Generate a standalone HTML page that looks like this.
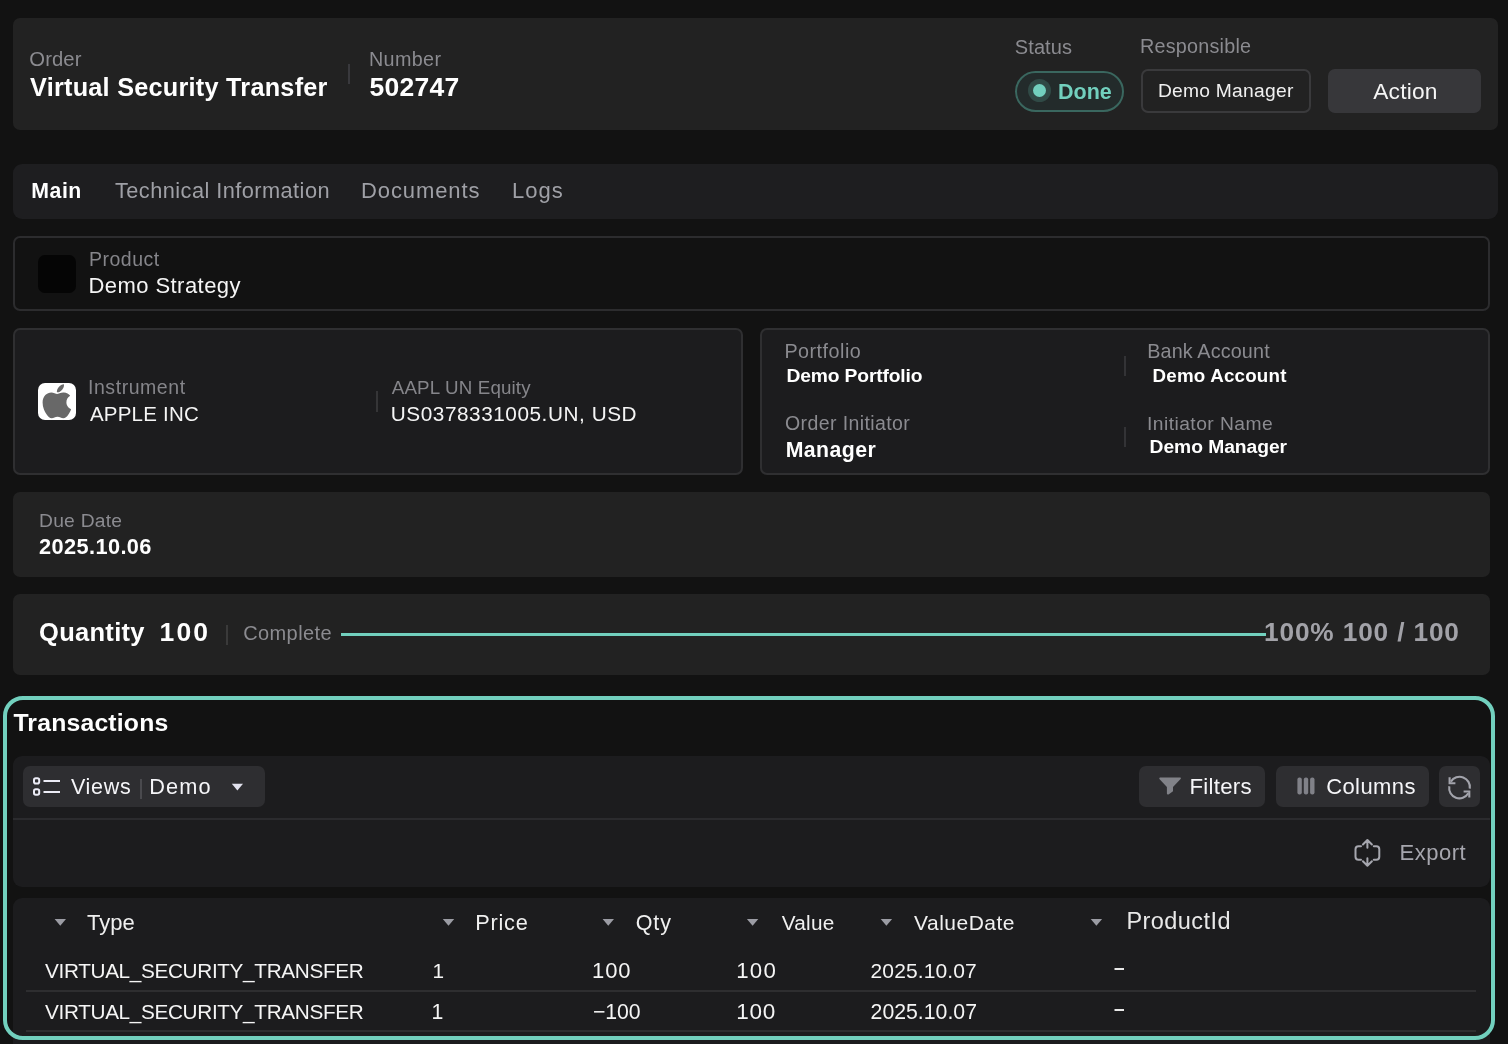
<!DOCTYPE html>
<html><head><meta charset="utf-8"><title>Order</title><style>
*{box-sizing:border-box;margin:0;padding:0}
html,body{width:1508px;height:1044px;overflow:hidden;background:#121212;font-family:"Liberation Sans",sans-serif}
.a{position:absolute}
.t{position:absolute;white-space:pre;font-family:"Liberation Sans",sans-serif}
.card{position:absolute;border-radius:7px}
</style></head>
<body>
<div class="a" style="left:13px;top:18px;width:1485px;height:112px;background:#222222;border-radius:7px"></div>
<div class="a" style="left:348px;top:64px;width:2px;height:20px;background:#39393d"></div>
<div class="a" style="left:1015px;top:71px;width:109px;height:41px;background:#232b2b;border:2px solid #3a675f;border-radius:21px"></div>
<div class="a" style="left:1028px;top:79px;width:23px;height:23px;background:#304a46;border-radius:50%"></div>
<div class="a" style="left:1033px;top:84px;width:13px;height:13px;background:#72d0be;border-radius:50%"></div>
<div class="a" style="left:1141px;top:69px;width:170px;height:44px;border:2px solid #3a3a3c;border-radius:7px"></div>
<div class="a" style="left:1328px;top:69px;width:153px;height:44px;background:#37373a;border-radius:7px"></div>
<div class="a" style="left:13px;top:164px;width:1485px;height:55px;background:#1e1e20;border-radius:9px"></div>
<div class="a" style="left:13px;top:236px;width:1477px;height:75px;border:2px solid #2c2c2e;border-radius:7px"></div>
<div class="a" style="left:38px;top:255px;width:38px;height:38px;background:#050505;border-radius:7px"></div>
<div class="a" style="left:13px;top:328px;width:730px;height:147px;background:#1c1c1e;border:2px solid #2f2f31;border-radius:7px"></div>
<div class="a" style="left:38px;top:383px;width:38px;height:37px;background:#ffffff;border-radius:7px"></div>
<div class="a" style="left:376px;top:391px;width:2px;height:21px;background:#353537"></div>
<div class="a" style="left:760px;top:328px;width:730px;height:147px;background:#1c1c1e;border:2px solid #2f2f31;border-radius:7px"></div>
<div class="a" style="left:1124px;top:356px;width:1.599999999999909px;height:20px;background:#333336"></div>
<div class="a" style="left:1124px;top:427px;width:1.599999999999909px;height:20px;background:#333336"></div>
<div class="a" style="left:13px;top:492px;width:1477px;height:85px;background:#222222;border-radius:7px"></div>
<div class="a" style="left:13px;top:594px;width:1477px;height:81px;background:#222222;border-radius:7px"></div>
<div class="a" style="left:226px;top:625px;width:2px;height:20px;background:#3a3a3a"></div>
<div class="a" style="left:341px;top:633px;width:925px;height:3px;background:#72d0be"></div>
<div class="a" style="left:13px;top:756px;width:1477px;height:131px;background:#1c1c1e;border-radius:9px"></div>
<div class="a" style="left:23px;top:766px;width:242px;height:41px;background:#2e2e31;border-radius:7px"></div>
<div class="a" style="left:140px;top:779px;width:2px;height:20px;background:#4a4a4e"></div>
<div class="a" style="left:13px;top:818px;width:1477px;height:2px;background:#2b2b2e"></div>
<div class="a" style="left:1139px;top:766px;width:126px;height:41px;background:#2e2e31;border-radius:7px"></div>
<div class="a" style="left:1276px;top:766px;width:153px;height:41px;background:#2e2e31;border-radius:7px"></div>
<div class="a" style="left:1439px;top:766px;width:41px;height:41px;background:#2e2e31;border-radius:7px"></div>
<div class="a" style="left:13px;top:898px;width:1477px;height:162px;background:#1c1c1e;border-radius:9px"></div>
<div class="a" style="left:26px;top:990px;width:1450px;height:2px;background:#2e2e30"></div>
<div class="a" style="left:26px;top:1030px;width:1450px;height:2px;background:#2e2e30"></div>
<div class="a" style="left:3px;top:696px;width:1492px;height:344px;border:4px solid #72d0be;border-radius:20px"></div>
<svg class="a" style="left:0;top:0" width="1508" height="1044" viewBox="0 0 1508 1044"><g transform="translate(42.3,381.85) scale(0.0757)" fill="#686868"><path d="M318.7 268.7c-.2-36.7 16.4-64.4 50-84.8-18.8-26.9-47.2-41.7-84.7-44.6-35.5-2.8-74.3 20.7-88.5 20.7-15 0-49.4-19.7-76.4-19.7C63.3 141.2 4 184.8 4 273.5q0 39.3 14.4 81.2c12.8 36.7 59 126.7 107.2 125.2 25.2-.6 43-17.9 75.8-17.9 31.8 0 48.3 17.9 76.4 17.9 48.6-.7 90.4-82.5 102.6-119.3-65.2-30.7-61.7-90-61.7-91.9zm-56.6-164.2c27.3-32.4 24.8-61.9 24-72.5-24.1 1.4-52 16.4-67.9 34.9-17.5 19.8-27.8 44.3-25.6 71.9 26.1 2 49.9-11.4 69.5-34.3z"/></g><g fill="none" stroke="#ececf6" stroke-width="2"><rect x="34" y="778.2" width="5.2" height="5.4" rx="1.8"/><rect x="34" y="789.2" width="5.2" height="5.6" rx="1.8"/></g><g stroke="#ececf6" stroke-width="2"><line x1="43.5" y1="781" x2="60" y2="781"/><line x1="43.5" y1="792" x2="60" y2="792"/></g><path d="M231.8 783.8 L243 783.8 L237.4 790.4 Z" fill="#e2e2ee"/><path d="M1160 777.6 L1180.5 777.6 Q1181.3 778.2 1180.6 779 L1173 787 L1173 791.2 L1168.9 794.2 Q1167 795 1166.9 793.4 L1166.9 787 L1159.4 779 Q1158.9 778.1 1160 777.6 Z" fill="#818288"/><g fill="#808188"><rect x="1297.4" y="777.5" width="4.4" height="17" rx="2"/><rect x="1303.8" y="777.5" width="4.4" height="17" rx="2"/><rect x="1310.1" y="777.5" width="4.4" height="17" rx="2"/></g><g fill="none" stroke="#a3a4ac" stroke-width="2.1" stroke-linecap="butt"><path d="M1469.8 788.6 A10.3 10.3 0 0 0 1450.9 781.6"/><path d="M1449.6 777.2 L1449.6 783.2 L1455.4 783.2"/><path d="M1449.3 786.3 A10.3 10.3 0 0 0 1468.3 793.3"/><path d="M1463.6 791.5 L1469.3 791.5 L1469.3 797.6"/></g><g fill="none" stroke="#a6a7af" stroke-width="2" stroke-linecap="round" stroke-linejoin="round"><path d="M1361.0 846.2 L1358.5 846.2 Q1355.5 846.2 1355.5 849.2 L1355.5 856.7 Q1355.5 859.7 1358.5 859.7 L1361.0 859.7"/><path d="M1373.8 846.2 L1376.3 846.2 Q1379.3 846.2 1379.3 849.2 L1379.3 856.7 Q1379.3 859.7 1376.3 859.7 L1373.8 859.7"/><path d="M1367.4 847.8 L1367.4 840.2 M1362.9 844.5 L1367.4 840.0 L1371.9 844.5"/><path d="M1367.4 858.2 L1367.4 865.6 M1362.9 861.3 L1367.4 865.8 L1371.9 861.3"/></g><path d="M54.6 919 L66.0 919 L60.300000000000004 925.8 Z" fill="#9b9ca4"/><path d="M442.8 919 L454.2 919 L448.5 925.8 Z" fill="#9b9ca4"/><path d="M602.6 919 L614.0 919 L608.3000000000001 925.8 Z" fill="#9b9ca4"/><path d="M746.9 919 L758.3 919 L752.6 925.8 Z" fill="#9b9ca4"/><path d="M880.7 919 L892.1 919 L886.4000000000001 925.8 Z" fill="#9b9ca4"/><path d="M1090.7 919 L1102.1000000000001 919 L1096.4 925.8 Z" fill="#9b9ca4"/><rect x="1114.5" y="968" width="9.5" height="2" fill="#e8e8e8"/><rect x="1114.5" y="1009" width="9.5" height="2" fill="#e8e8e8"/></svg>
<div class="a" style="left:0;top:0;width:1508px;height:1044px;will-change:transform">
<div class="t" style="left:29.3px;top:49.3px;font-size:20.25px;line-height:20.25px;font-weight:400;letter-spacing:0.1px;color:#8b8b90">Order</div>
<div class="t" style="left:30px;top:74.7px;font-size:25.25px;line-height:25.25px;font-weight:700;letter-spacing:0.25px;color:#ffffff">Virtual Security Transfer</div>
<div class="t" style="left:369px;top:50.2px;font-size:19.75px;line-height:19.75px;font-weight:400;letter-spacing:0.35px;color:#8b8b90">Number</div>
<div class="t" style="left:369.6px;top:74.2px;font-size:26.5px;line-height:26.5px;font-weight:700;letter-spacing:0.25px;color:#ffffff">502747</div>
<div class="t" style="left:1014.8px;top:37.3px;font-size:20.0px;line-height:20.0px;font-weight:400;letter-spacing:0.1px;color:#8b8b90">Status</div>
<div class="t" style="left:1057.9px;top:82px;font-size:21.5px;line-height:21.5px;font-weight:700;letter-spacing:0.05px;color:#72d0be">Done</div>
<div class="t" style="left:1139.9px;top:37.3px;font-size:19.75px;line-height:19.75px;font-weight:400;letter-spacing:0.25px;color:#8b8b90">Responsible</div>
<div class="t" style="left:1157.9px;top:80.5px;font-size:19.25px;line-height:19.25px;font-weight:400;letter-spacing:0.25px;color:#f0f0f0">Demo Manager</div>
<div class="t" style="left:1373.2px;top:79.5px;font-size:22.75px;line-height:22.75px;font-weight:400;letter-spacing:0.2px;color:#f5f5f5">Action</div>
<div class="t" style="left:31.3px;top:181px;font-size:21.25px;line-height:21.25px;font-weight:700;letter-spacing:0.55px;color:#ffffff">Main</div>
<div class="t" style="left:115px;top:180px;font-size:21.75px;line-height:21.75px;font-weight:400;letter-spacing:0.45px;color:#9fa0a6">Technical Information</div>
<div class="t" style="left:361px;top:180px;font-size:22.0px;line-height:22.0px;font-weight:400;letter-spacing:0.9px;color:#9fa0a6">Documents</div>
<div class="t" style="left:512px;top:180px;font-size:22.0px;line-height:22.0px;font-weight:400;letter-spacing:1.0px;color:#9fa0a6">Logs</div>
<div class="t" style="left:89px;top:250px;font-size:19.5px;line-height:19.5px;font-weight:400;letter-spacing:0.5px;color:#85858a">Product</div>
<div class="t" style="left:88.4px;top:275.3px;font-size:22.0px;line-height:22.0px;font-weight:400;letter-spacing:0.45px;color:#f5f5f5">Demo Strategy</div>
<div class="t" style="left:88px;top:378.3px;font-size:19.5px;line-height:19.5px;font-weight:400;letter-spacing:0.55px;color:#85858a">Instrument</div>
<div class="t" style="left:90px;top:403.8px;font-size:20.5px;line-height:20.5px;font-weight:400;letter-spacing:0.2px;color:#f5f5f5">APPLE INC</div>
<div class="t" style="left:391.8px;top:379.3px;font-size:18.75px;line-height:18.75px;font-weight:400;letter-spacing:0.15px;color:#85858a">AAPL UN Equity</div>
<div class="t" style="left:390.8px;top:403.8px;font-size:20.75px;line-height:20.75px;font-weight:400;letter-spacing:0.55px;color:#f5f5f5">US0378331005.UN, USD</div>
<div class="t" style="left:784.4px;top:342px;font-size:19.75px;line-height:19.75px;font-weight:400;letter-spacing:0.5px;color:#8b8b90">Portfolio</div>
<div class="t" style="left:786.5px;top:365.6px;font-size:19.25px;line-height:19.25px;font-weight:700;letter-spacing:-0.15px;color:#ffffff">Demo Portfolio</div>
<div class="t" style="left:785px;top:414px;font-size:19.5px;line-height:19.5px;font-weight:400;letter-spacing:0.4px;color:#8b8b90">Order Initiator</div>
<div class="t" style="left:785.7px;top:439.8px;font-size:21.25px;line-height:21.25px;font-weight:700;letter-spacing:0.45px;color:#ffffff">Manager</div>
<div class="t" style="left:1147.2px;top:342.2px;font-size:19.75px;line-height:19.75px;font-weight:400;letter-spacing:0.15px;color:#8b8b90">Bank Account</div>
<div class="t" style="left:1152.6px;top:366.6px;font-size:18.75px;line-height:18.75px;font-weight:700;letter-spacing:0.2px;color:#ffffff">Demo Account</div>
<div class="t" style="left:1147px;top:414px;font-size:19.25px;line-height:19.25px;font-weight:400;letter-spacing:0.45px;color:#8b8b90">Initiator Name</div>
<div class="t" style="left:1149.6px;top:436.7px;font-size:19.25px;line-height:19.25px;font-weight:700;letter-spacing:-0.05px;color:#ffffff">Demo Manager</div>
<div class="t" style="left:39px;top:510.8px;font-size:19.25px;line-height:19.25px;font-weight:400;letter-spacing:0.25px;color:#8b8b90">Due Date</div>
<div class="t" style="left:39px;top:536.2px;font-size:21.75px;line-height:21.75px;font-weight:700;letter-spacing:0.4px;color:#ffffff">2025.10.06</div>
<div class="t" style="left:39px;top:620.2px;font-size:25.5px;line-height:25.5px;font-weight:700;letter-spacing:0.3px;color:#ffffff">Quantity</div>
<div class="t" style="left:159.6px;top:618.7px;font-size:26.5px;line-height:26.5px;font-weight:700;letter-spacing:2.05px;color:#ffffff">100</div>
<div class="t" style="left:243.2px;top:622.5px;font-size:20.0px;line-height:20.0px;font-weight:400;letter-spacing:0.4px;color:#8b8b90">Complete</div>
<div class="t" style="left:1264px;top:618.9px;font-size:26.25px;line-height:26.25px;font-weight:700;letter-spacing:0.85px;color:#a2a2a8">100% 100 / 100</div>
<div class="t" style="left:13.4px;top:710.9px;font-size:24.75px;line-height:24.75px;font-weight:700;letter-spacing:0.2px;color:#ffffff">Transactions</div>
<div class="t" style="left:70.9px;top:777.1px;font-size:21.5px;line-height:21.5px;font-weight:400;letter-spacing:0.7px;color:#f5f5f8">Views</div>
<div class="t" style="left:149.2px;top:776.1px;font-size:21.75px;line-height:21.75px;font-weight:400;letter-spacing:1.1px;color:#f5f5f8">Demo</div>
<div class="t" style="left:1189.5px;top:776.3px;font-size:22.25px;line-height:22.25px;font-weight:400;letter-spacing:0.25px;color:#f5f5f8">Filters</div>
<div class="t" style="left:1326.2px;top:776.3px;font-size:22.0px;line-height:22.0px;font-weight:400;letter-spacing:0.4px;color:#f5f5f8">Columns</div>
<div class="t" style="left:1399.5px;top:842.1px;font-size:22.0px;line-height:22.0px;font-weight:400;letter-spacing:0.5px;color:#a6a6ae">Export</div>
<div class="t" style="left:87px;top:912.1px;font-size:22.0px;line-height:22.0px;font-weight:400;letter-spacing:0.05px;color:#f0f0f0">Type</div>
<div class="t" style="left:475.2px;top:912.2px;font-size:21.75px;line-height:21.75px;font-weight:400;letter-spacing:0.75px;color:#f0f0f0">Price</div>
<div class="t" style="left:635.7px;top:913.2px;font-size:21.5px;line-height:21.5px;font-weight:400;letter-spacing:0.9px;color:#f0f0f0">Qty</div>
<div class="t" style="left:781.7px;top:913.2px;font-size:20.75px;line-height:20.75px;font-weight:400;letter-spacing:0.25px;color:#f0f0f0">Value</div>
<div class="t" style="left:914px;top:912.2px;font-size:21.0px;line-height:21.0px;font-weight:400;letter-spacing:0.5px;color:#f0f0f0">ValueDate</div>
<div class="t" style="left:1126.4px;top:909.8px;font-size:23.5px;line-height:23.5px;font-weight:400;letter-spacing:0.45px;color:#e8e8e8">ProductId</div>
<div class="t" style="left:45px;top:961.2px;font-size:20.75px;line-height:20.75px;font-weight:400;letter-spacing:-0.35px;color:#f5f5f5">VIRTUAL_SECURITY_TRANSFER</div>
<div class="t" style="left:432.4px;top:961.2px;font-size:20.75px;line-height:20.75px;font-weight:400;letter-spacing:0.0px;color:#f5f5f5">1</div>
<div class="t" style="left:592px;top:960.2px;font-size:22.0px;line-height:22.0px;font-weight:400;letter-spacing:0.9px;color:#f5f5f5">100</div>
<div class="t" style="left:736.3px;top:960.2px;font-size:22.25px;line-height:22.25px;font-weight:400;letter-spacing:1.2px;color:#f5f5f5">100</div>
<div class="t" style="left:870.6px;top:960.2px;font-size:21.0px;line-height:21.0px;font-weight:400;letter-spacing:0.1px;color:#f5f5f5">2025.10.07</div>
<div class="t" style="left:45px;top:1002px;font-size:20.75px;line-height:20.75px;font-weight:400;letter-spacing:-0.35px;color:#f5f5f5">VIRTUAL_SECURITY_TRANSFER</div>
<div class="t" style="left:431.4px;top:1002px;font-size:21.25px;line-height:21.25px;font-weight:400;letter-spacing:0.0px;color:#f5f5f5">1</div>
<div class="t" style="left:593px;top:1002px;font-size:21.25px;line-height:21.25px;font-weight:400;letter-spacing:-0.1px;color:#f5f5f5">−100</div>
<div class="t" style="left:736.3px;top:1001px;font-size:22.5px;line-height:22.5px;font-weight:400;letter-spacing:0.7px;color:#f5f5f5">100</div>
<div class="t" style="left:870.6px;top:1002px;font-size:21.25px;line-height:21.25px;font-weight:400;letter-spacing:0.0px;color:#f5f5f5">2025.10.07</div>
</div>
</body></html>
